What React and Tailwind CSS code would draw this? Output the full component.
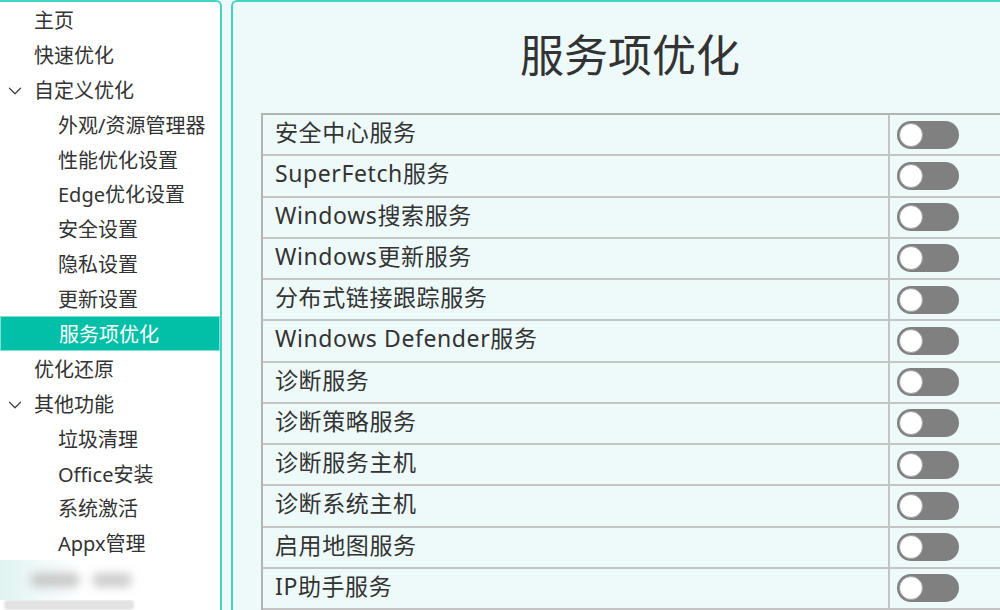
import React from "react";
import { ChevronDown } from "lucide-react";

const menu = [
  { label: "主页", level: 0 },
  { label: "快速优化", level: 0 },
  { label: "自定义优化", level: 0, open: true },
  { label: "外观/资源管理器", level: 1 },
  { label: "性能优化设置", level: 1 },
  { label: "Edge优化设置", level: 1 },
  { label: "安全设置", level: 1 },
  { label: "隐私设置", level: 1 },
  { label: "更新设置", level: 1 },
  { label: "服务项优化", level: 1, active: true },
  { label: "优化还原", level: 0 },
  { label: "其他功能", level: 0, open: true },
  { label: "垃圾清理", level: 1 },
  { label: "Office安装", level: 1 },
  { label: "系统激活", level: 1 },
  { label: "Appx管理", level: 1 },
];

const services = [
  "安全中心服务",
  "SuperFetch服务",
  "Windows搜索服务",
  "Windows更新服务",
  "分布式链接跟踪服务",
  "Windows Defender服务",
  "诊断服务",
  "诊断策略服务",
  "诊断服务主机",
  "诊断系统主机",
  "启用地图服务",
  "IP助手服务",
];

const font = { fontFamily: '"Noto Sans", "Noto Sans CJK SC", sans-serif' };

const Toggle = () => (
  <div className="w-[62px] h-[28px] rounded-full bg-[#808080] flex items-center pl-[2px]">
    <div className="w-[24px] h-[24px] rounded-full bg-white border-[1.5px] border-[#a0a0a0]" />
  </div>
);

export default function App() {
  return (
    <div className="flex h-[610px] w-[1000px] overflow-hidden bg-[#eefafa] text-[#333]" style={font}>
      {/* sidebar */}
      <div className="w-[222px] shrink-0 bg-white border-t-2 border-r-2 border-[#44d3c4] rounded-tr-[6px] flex flex-col">
        {menu.map((m) => (
          <div
            key={m.label}
            className={
              "h-[35px] flex items-center text-[20px] leading-none " +
              (m.active ? "bg-[#02bfa8] text-white border border-[#7fe0d4]" : "")
            }
          >
            <div className="w-[34px] shrink-0 flex items-center pl-[4px] pt-[3px]">
              {m.open && <ChevronDown size={22} strokeWidth={1.4} className="text-[#444]" />}
            </div>
            <span className={"pt-[3px] " + (m.level === 1 ? "pl-[24px]" : "")}>{m.label}</span>
          </div>
        ))}
        <div className="h-[40px] w-[165px] bg-gradient-to-r from-[#dff3f1] via-white to-white flex items-center pl-[30px] gap-3">
          <div className="h-[14px] w-[50px] rounded-full bg-[#c8c8c8] blur-[5px]" />
          <div className="h-[14px] w-[40px] rounded-full bg-[#cdcdcd] blur-[5px]" />
        </div>
        <div className="h-[10px] w-[150px] pl-[4px] overflow-hidden">
          <div className="h-[10px] w-[130px] bg-[#e2e2e2] blur-[1px] rounded-sm" />
        </div>
      </div>

      <div className="w-[9px] shrink-0" />

      {/* main panel */}
      <div className="w-[800px] shrink-0 bg-[#eefafa] border-t-2 border-l-2 border-[#44d3c4] rounded-tl-[6px] flex flex-col pl-[28px]">
        <div className="h-[111px] flex items-center justify-center pr-[32px] pb-[6px]">
          <h1 className="text-[44px] leading-none text-[#333]">服务项优化</h1>
        </div>
        <div className="w-[780px] border-t-2 border-l-2 border-[#b4b4b4]">
          {services.map((s) => (
            <div key={s} className="h-[41.25px] flex border-b-2 border-[#c4c4c4]">
              <div className="w-[627px] shrink-0 flex items-center pl-[12px] pb-[4px] text-[23px] tracking-[0.6px] leading-none text-[#333] border-r-2 border-[#c4c4c4]">
                {s}
              </div>
              <div className="flex items-center pl-[7px]">
                <Toggle />
              </div>
            </div>
          ))}
        </div>
      </div>
    </div>
  );
}
